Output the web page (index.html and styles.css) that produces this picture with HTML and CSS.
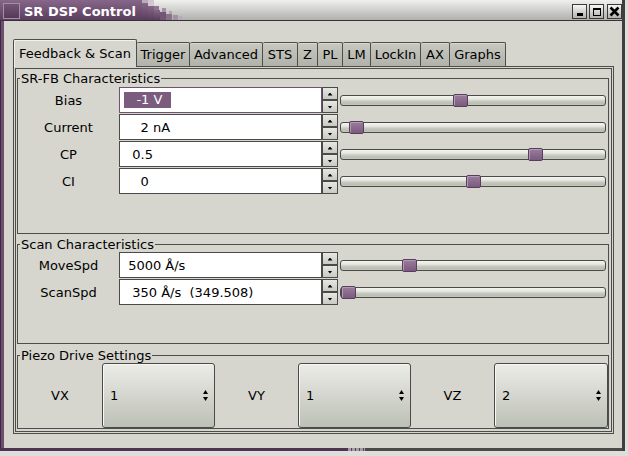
FILE: index.html
```html
<!DOCTYPE html>
<html>
<head>
<meta charset="utf-8">
<title>SR DSP Control</title>
<link rel="stylesheet" href="styles.css">
</head>
<body>
<div class="screen">
  <div class="window">
    <div class="titlebar">
      <div class="tb-purple">
        <span class="tb-icon"></span>
        <span class="tb-title">SR DSP Control</span>
      </div>
      <svg class="tb-steps" width="46" height="20" viewBox="0 0 46 20">
        <defs>
          <linearGradient id="pg" x1="0" y1="0" x2="0" y2="1">
            <stop offset="0" stop-color="#86678a"/>
            <stop offset="1" stop-color="#5b3d5d"/>
          </linearGradient>
        </defs>
        <rect x="0" y="0" width="4" height="20" fill="url(#pg)"/>
        <rect x="4" y="0" width="6" height="3" fill="#b9adba"/>
        <rect x="4" y="3" width="6" height="17" fill="url(#pg)"/>
        <rect x="10" y="0" width="6" height="6" fill="#cfc8cf"/>
        <rect x="10" y="6" width="6" height="14" fill="url(#pg)"/>
        <rect x="16" y="6" width="5" height="4" fill="#8e7591"/>
        <rect x="16" y="10" width="6" height="10" fill="url(#pg)"/>
        <rect x="22" y="12" width="6" height="8" fill="#735676"/>
        <rect x="24" y="8" width="4" height="4" fill="#a393a5"/>
        <rect x="28" y="14" width="6" height="6" fill="#8a718c"/>
        <rect x="31" y="11" width="3" height="3" fill="#b0a4b1"/>
        <rect x="35" y="15" width="5" height="5" fill="#a092a2"/>
        <rect x="41" y="16" width="3" height="4" fill="#b6acb7"/>
      </svg>
      <div class="tb-fill"></div>
      <div class="tb-buttons">
        <span class="tb-btn"><svg width="13" height="13" viewBox="0 0 13 13"><rect x="4" y="8" width="6" height="3" fill="#000"/></svg></span>
        <span class="tb-btn"><svg width="13" height="13" viewBox="0 0 13 13"><path d="M3 3h8v8H3z M4 5v5h6V5z" fill="#000" fill-rule="evenodd"/></svg></span>
        <span class="tb-btn close"><svg width="13" height="13" viewBox="0 0 13 13"><path d="M2.5 2.5l8 8M10.5 2.5l-8 8" stroke="#000" stroke-width="2.6"/></svg></span>
      </div>
    </div>
    <div class="mid">
      <div class="lborder"></div>
      <div class="client">
        <div class="notebook">
          <div class="tabs">
            <div class="tab active t-fb">Feedback &amp; Scan</div>
            <div class="tab t-trig">Trigger</div>
            <div class="tab t-adv">Advanced</div>
            <div class="tab t-sts">STS</div>
            <div class="tab t-z">Z</div>
            <div class="tab t-pl">PL</div>
            <div class="tab t-lm">LM</div>
            <div class="tab t-lock">LockIn</div>
            <div class="tab t-ax">AX</div>
            <div class="tab t-graph">Graphs</div>
          </div>
          <div class="page">
            <div class="page-inner">
              <fieldset class="group g-fb">
                <legend>SR-FB Characteristics</legend>
                <div class="row">
                  <span class="lbl">Bias</span>
                  <div class="entry focus"><span class="sel">   -1 V  </span></div>
                  <div class="spin"><span class="sb up"><i></i></span><span class="sb down"><i></i></span></div>
                  <div class="scale"><span class="thumb" style="left:112px"></span></div>
                </div>
                <div class="row">
                  <span class="lbl">Current</span>
                  <div class="entry">    2 nA</div>
                  <div class="spin"><span class="sb up"><i></i></span><span class="sb down"><i></i></span></div>
                  <div class="scale"><span class="thumb" style="left:8px"></span></div>
                </div>
                <div class="row">
                  <span class="lbl">CP</span>
                  <div class="entry">  0.5</div>
                  <div class="spin"><span class="sb up"><i></i></span><span class="sb down"><i></i></span></div>
                  <div class="scale"><span class="thumb" style="left:187px"></span></div>
                </div>
                <div class="row">
                  <span class="lbl">CI</span>
                  <div class="entry">    0</div>
                  <div class="spin"><span class="sb up"><i></i></span><span class="sb down"><i></i></span></div>
                  <div class="scale"><span class="thumb" style="left:125px"></span></div>
                </div>
              </fieldset>
              <fieldset class="group g-scan">
                <legend>Scan Characteristics</legend>
                <div class="row">
                  <span class="lbl">MoveSpd</span>
                  <div class="entry"> 5000 Å/s</div>
                  <div class="spin"><span class="sb up"><i></i></span><span class="sb down"><i></i></span></div>
                  <div class="scale"><span class="thumb" style="left:61px"></span></div>
                </div>
                <div class="row">
                  <span class="lbl">ScanSpd</span>
                  <div class="entry">  350 Å/s  (349.508)</div>
                  <div class="spin"><span class="sb up"><i></i></span><span class="sb down"><i></i></span></div>
                  <div class="scale"><span class="thumb" style="left:0px"></span></div>
                </div>
              </fieldset>
              <fieldset class="group g-piezo">
                <legend>Piezo Drive Settings</legend>
                <div class="piezo">
                  <span class="plbl">VX</span>
                  <div class="combo"><span>1</span><svg width="5" height="11" viewBox="0 0 5 11"><path d="M2.5 0L5 4H0z M0 7h5L2.5 11z" fill="#000"/></svg></div>
                  <span class="plbl">VY</span>
                  <div class="combo"><span>1</span><svg width="5" height="11" viewBox="0 0 5 11"><path d="M2.5 0L5 4H0z M0 7h5L2.5 11z" fill="#000"/></svg></div>
                  <span class="plbl">VZ</span>
                  <div class="combo"><span>2</span><svg width="5" height="11" viewBox="0 0 5 11"><path d="M2.5 0L5 4H0z M0 7h5L2.5 11z" fill="#000"/></svg></div>
                </div>
              </fieldset>
            </div>
          </div>
        </div>
      </div>
    </div>
    <div class="wb"></div>
  </div>
  <div class="rborder"></div>
</div>
</body>
</html>
```
FILE: styles.css
```css
* { box-sizing: border-box; }
html, body { margin: 0; padding: 0; }
body {
  width: 628px;
  height: 456px;
  overflow: hidden;
  background: #dededc;
  font-family: "DejaVu Sans", sans-serif;
  font-size: 13px;
  color: #000;
}
.screen { display: flex; width: 628px; height: 456px; }
.window { display: flex; flex-direction: column; width: 622px; height: 451px; }
.rborder { width: 3px; height: 451px; background: #3f3f3f; }

/* title bar */
.titlebar {
  display: flex;
  height: 21px;
  border-bottom: 1px solid #3a2f3b;
  background: linear-gradient(#f0f0ee, #b0b0ac);
}
.tb-purple {
  display: flex;
  align-items: flex-start;
  width: 138px;
  height: 20px;
  background: linear-gradient(#86678a, #5b3d5d);
}
.tb-icon {
  width: 17px;
  height: 16px;
  margin: 3px 4px 0 3px;
  border: 1px solid #a58fa8;
  background: linear-gradient(#735576, #56395a);
}
.tb-title {
  color: #fff;
  font-weight: bold;
  font-size: 13px;
  line-height: 16px;
  padding-top: 4px;
  white-space: nowrap;
}
.tb-steps { display: block; flex: none; }
.tb-fill { flex: 1; }
.tb-buttons { display: flex; padding-top: 4px; }
.tb-btn {
  display: flex;
  align-items: center;
  justify-content: center;
  width: 15px;
  height: 15px;
  margin-left: 2px;
  border: 1px solid #3a3a3a;
  background: linear-gradient(#f6f6f4, #b2b2ae);
}
.tb-btn.close { margin-left: 3px; }
.tb-btn svg { display: block; }

/* window body */
.mid { display: flex; height: 427px; }
.lborder { width: 4px; background: linear-gradient(to right, #3e2840 0, #3e2840 1px, #6c4f6e 1px); }
.client {
  width: 618px;
  background: #d6d6ce;
  padding: 18px 8px 14px 9px;
}
.wb {
  height: 3px;
  background:
    linear-gradient(to right, #4f3451 0, #4f3451 348px, transparent 348px),
    repeating-linear-gradient(to right, #a898aa 0, #a898aa 3px, #4a4a4a 3px, #4a4a4a 4px) 348px 0 / 17px 100% no-repeat,
    #4a4a4a;
}

/* notebook */
.notebook { display: flex; flex-direction: column; width: 601px; }
.tabs { display: flex; align-items: flex-end; height: 27px; }
.tab {
  height: 24px;
  border: 1px solid #4d4d4b;
  border-left: none;
  border-bottom: none;
  border-radius: 2px 2px 0 0;
  background: linear-gradient(#c7c9c1, #b1b3ab);
  box-shadow: inset 0 1px 0 #d8d9d3;
  text-align: center;
  line-height: 15px;
  padding-top: 4px;
  white-space: nowrap;
}
.tab.active {
  height: 28px;
  border-left: 1px solid #4d4d4b;
  margin-bottom: -1px;
  position: relative;
  z-index: 1;
  background: #d6d6ce;
  box-shadow: inset 1px 1px 0 #f1f1ed;
  padding-top: 6px;
}
.t-fb { width: 124px; }
.t-trig { width: 53px; }
.t-adv { width: 73px; }
.t-sts { width: 35px; }
.t-z { width: 20px; }
.t-pl { width: 25px; }
.t-lm { width: 28px; }
.t-lock { width: 50px; }
.t-ax { width: 29px; }
.t-graph { width: 56px; }

.page {
  height: 368px;
  border: 1px solid #4d4d4b;
  padding: 1px;
  background: #d6d6ce;
}
.page-inner {
  height: 100%;
  border: 1px solid #4d4d4b;
  display: flex;
  flex-direction: column;
}

/* frames */
.group {
  margin: 0 2px 0 1px;
  padding: 0;
  border: 1px solid #4d4d4b;
  min-width: 0;
}
.group legend {
  padding: 0 1px;
  margin-left: 2px;
  font-size: 13px;
  line-height: 15px;
}
.g-fb { margin-top: 2px; padding: 1px 0 39px; }
.g-scan { margin-top: 3px; padding: 0 0 38px; }
.g-piezo { margin-top: 4px; padding: 0; }

/* rows */
.row {
  display: grid;
  grid-template-columns: 101px 203px 16px 268px;
  height: 26px;
}
.row + .row { margin-top: 1px; }
.lbl { align-self: center; text-align: center; line-height: 15px; }
.entry {
  display: flex;
  align-items: center;
  height: 26px;
  padding-left: 4px;
  border: 1px solid #4a4a48;
  background: #fff;
  white-space: pre;
  overflow: hidden;
}
.entry.focus { border-color: #6f5171; }
.sel {
  display: inline-block;
  line-height: 16px;
  background: #7b5b7e;
  color: #fff;
  white-space: pre;
}
.spin { display: flex; flex-direction: column; }
.sb {
  display: flex;
  align-items: center;
  justify-content: center;
  height: 13px;
  border: 1px solid #4a4a48;
  background: linear-gradient(#e6e7e1, #c9cbc3);
}
.sb i {
  display: block;
  width: 5px;
  height: 3px;
  background: #000;
}
.sb.up i { clip-path: polygon(50% 0, 100% 100%, 0 100%); margin-top: 1px; }
.sb.down i { clip-path: polygon(0 0, 100% 0, 50% 100%); margin-top: 1px; }

.scale {
  position: relative;
  width: 266px;
  height: 11px;
  margin: 8px 0 0 2px;
  border: 1px solid #4a4a48;
  border-radius: 3px;
  background: linear-gradient(#f4f4f1 0, #e6e7e1 35%, #c6c9be 60%, #b9bcb1 90%, #cfd1c9 100%);
}
.thumb {
  position: absolute;
  top: -2px;
  width: 15px;
  height: 13px;
  border: 1px solid #5a3d5c;
  border-radius: 2px;
  background: linear-gradient(#9a7c9d, #7b5b7d);
  box-shadow: inset 1px 1px 0 #b29cb4;
}

/* piezo */
.piezo {
  display: grid;
  grid-template-columns: 84px 113px 83px 113px 83px 114px;
  height: 65px;
}
.plbl { display: flex; align-items: center; justify-content: center; }
.combo {
  display: flex;
  align-items: center;
  justify-content: space-between;
  padding: 0 6px 0 7px;
  border: 1px solid #4a4a48;
  border-radius: 3px;
  background: linear-gradient(#ebece7, #bdc0b6);
  box-shadow: inset 1px 1px 0 #f7f7f4;
}
.combo svg { display: block; }
```
